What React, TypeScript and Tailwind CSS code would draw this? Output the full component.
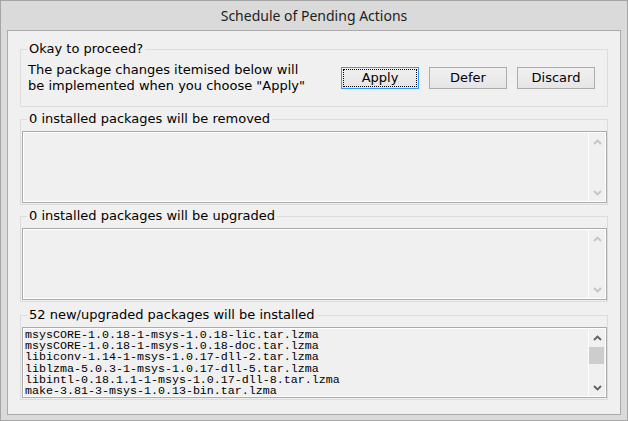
import React from 'react';

const installed = [
  'msysCORE-1.0.18-1-msys-1.0.18-lic.tar.lzma',
  'msysCORE-1.0.18-1-msys-1.0.18-doc.tar.lzma',
  'libiconv-1.14-1-msys-1.0.17-dll-2.tar.lzma',
  'liblzma-5.0.3-1-msys-1.0.17-dll-5.tar.lzma',
  'libintl-0.18.1.1-1-msys-1.0.17-dll-8.tar.lzma',
  'make-3.81-3-msys-1.0.13-bin.tar.lzma',
];

function Chevron({ up, color }: { up?: boolean; color: string }) {
  return (
    <svg width="9" height="6" viewBox="0 0 9 6" className="block">
      <path
        d={up ? 'M1 5 L4.5 1.5 L8 5' : 'M1 1 L4.5 4.5 L8 1'}
        fill="none"
        stroke={color}
        strokeWidth="1.8"
      />
    </svg>
  );
}

function Scrollbar({ enabled }: { enabled?: boolean }) {
  const c = enabled ? '#606060' : '#c4c4c4';
  return (
    <div className="w-[17px] h-full flex flex-col border-l border-white bg-[#f0f0f0]">
      <div className="h-[17px] flex items-center justify-center">
        <Chevron up color={c} />
      </div>
      <div className="flex-1">
        {enabled && <div className="mt-[1px] h-[17px] w-[15px] bg-[#cdcdcd]" />}
      </div>
      <div className="h-[17px] flex items-center justify-center">
        <Chevron color={c} />
      </div>
    </div>
  );
}

function ListBox({ items, h }: { items: string[]; h: string }) {
  return (
    <div className={`${h} flex border border-[#ababab] shadow-[inset_0_0_0_1px_#fff] p-[1px] bg-[#f0f0f0]`}>
      <div className="flex-1 min-w-0 pl-[1px] pt-[1px] font-['Liberation_Mono',monospace] text-[11.67px] leading-[11.2px] text-black">
        {items.map((it) => (
          <div key={it} className="whitespace-pre">{it}</div>
        ))}
      </div>
      <Scrollbar enabled={items.length > 0} />
    </div>
  );
}

function Group({ label, className, children }: { label: string; className: string; children: React.ReactNode }) {
  return (
    <div className={`relative border border-[#dcdcdc] ${className}`}>
      <span className="absolute left-[6px] top-[-9px] px-[2px] bg-[#f0f0f0] leading-[16px]">{label}</span>
      {children}
    </div>
  );
}

export default function App() {
  return (
    <div className="w-[628px] h-[421px] flex flex-col bg-[#dadada] border border-[#a5a5a5] pl-[6px] pr-[6px] pb-[5px] font-['DejaVu_Sans',sans-serif] text-[13px] text-black">
      {/* Title bar */}
      <div className="h-[29px] flex items-center justify-center font-['Noto_Sans',sans-serif] text-[14px] text-[#1e1e1e]">
        Schedule of Pending Actions
      </div>

      {/* Client area */}
      <div className="flex-1 flex flex-col border border-[#ababab] bg-[#f0f0f0] px-[12px]">
        <Group label="Okay to proceed?" className="mt-[18px] h-[58px] flex items-center pl-[7px] pr-[12px]">
          <div className="leading-[16px]">
            <div>The package changes itemised below will</div>
            <div>be implemented when you choose "Apply"</div>
          </div>
          <div className="ml-auto flex gap-[10px]">
            <button className="relative w-[78px] h-[22px] border border-[#3399ff] bg-gradient-to-b from-[#f0f0f0] to-[#e5e5e5] text-[13px]">
              <span className="absolute inset-[1px] border border-dotted border-black" />
              Apply
            </button>
            <button className="w-[78px] h-[22px] border border-[#acacac] bg-gradient-to-b from-[#f0f0f0] to-[#e5e5e5] text-[13px]">
              Defer
            </button>
            <button className="w-[78px] h-[22px] border border-[#acacac] bg-gradient-to-b from-[#f0f0f0] to-[#e5e5e5] text-[13px]">
              Discard
            </button>
          </div>
        </Group>

        <Group label="0 installed packages will be removed" className="mt-[12px] h-[86px] pt-[11px] pl-[1px]">
          <ListBox items={[]} h="h-[72px]" />
        </Group>

        <Group label="0 installed packages will be upgraded" className="mt-[11px] h-[86px] pt-[11px] pl-[1px]">
          <ListBox items={[]} h="h-[72px]" />
        </Group>

        <Group label="52 new/upgraded packages will be installed" className="mt-[13px] h-[85px] pt-[11px] pl-[1px]">
          <ListBox items={installed} h="h-[71px]" />
        </Group>
      </div>
    </div>
  );
}
